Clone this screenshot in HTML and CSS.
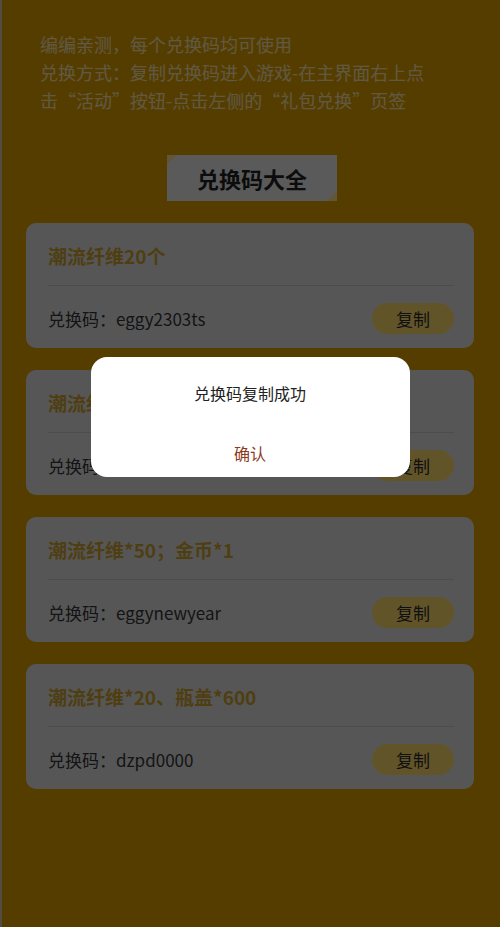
FILE: index.html
```html
<!DOCTYPE html>
<html lang="zh-CN">
<head>
  <meta charset="UTF-8">
  <meta name="viewport" content="width=device-width, initial-scale=1.0">
  <title>兑换码大全</title>
  <link rel="stylesheet" href="styles.css">
</head>
<body>
  <div class="page">
    <div class="intro">
      <p>编编亲测，每个兑换码均可使用</p>
      <p>兑换方式：复制兑换码进入游戏-在主界面右上点击“活动”按钮-点击左侧的“礼包兑换”页签</p>
    </div>

    <div class="badge-wrap">
      <h2 class="badge">兑换码大全</h2>
    </div>

    <div class="code-list">
      <div class="code-card">
        <div class="code-title">潮流纤维20个</div>
        <div class="code-row">
          <span class="code-text">兑换码：eggy2303ts</span>
          <button class="copy-btn">复制</button>
        </div>
      </div>

      <div class="code-card">
        <div class="code-title">潮流纤维*30</div>
        <div class="code-row">
          <span class="code-text">兑换码：eggyparty</span>
          <button class="copy-btn">复制</button>
        </div>
      </div>

      <div class="code-card">
        <div class="code-title">潮流纤维*50；金币*1</div>
        <div class="code-row">
          <span class="code-text">兑换码：eggynewyear</span>
          <button class="copy-btn">复制</button>
        </div>
      </div>

      <div class="code-card">
        <div class="code-title">潮流纤维*20、瓶盖*600</div>
        <div class="code-row">
          <span class="code-text">兑换码：dzpd0000</span>
          <button class="copy-btn">复制</button>
        </div>
      </div>
    </div>
  </div>

  <div class="mask">
    <div class="dialog">
      <div class="dialog-msg">兑换码复制成功</div>
      <div class="dialog-btn">确认</div>
    </div>
  </div>
</body>
</html>
```

FILE: styles.css
```css
html, body {
  margin: 0;
  padding: 0;
}
body {
  font-family: "Noto Sans CJK SC", "Noto Sans", sans-serif;
  background-color: #d59a00;
  min-height: 927px;
}
.page {
  border-left: 2px solid #c8c0a8;
  min-height: 927px;
  box-sizing: border-box;
}
.intro {
  width: 396px;
  padding: 30px 0 0 38px;
  color: rgba(255, 255, 255, 0.68);
  font-size: 18px;
  line-height: 28px;
}
.intro p {
  margin: 0;
}
.badge-wrap {
  display: flex;
  justify-content: center;
  margin-top: 41px;
}
.badge {
  position: relative;
  margin: 0;
  width: 170px;
  height: 46px;
  line-height: 46px;
  text-align: center;
  background: #e0e0e0;
  color: #1e1e1e;
  font-size: 22px;
  font-weight: bold;
  margin-left: 2px;
}
.badge::before,
.badge::after {
  content: "";
  position: absolute;
  width: 0;
  height: 0;
  border: 5px solid transparent;
}
.badge::before {
  left: 0;
  top: 0;
  border-left-color: #efd890;
  border-top-color: #efd890;
}
.badge::after {
  right: 0;
  bottom: 0;
  border-right-color: #efd890;
  border-bottom-color: #efd890;
}
.code-list {
  display: flex;
  flex-direction: column;
  gap: 22px;
  margin: 22px 26px 0 24px;
}
.code-card {
  background: #d8d8da;
  border-radius: 10px;
  padding: 20px 20px 14px 22px;
  height: 125px;
  box-sizing: border-box;
}
.code-title {
  color: #c49c2c;
  font-size: 19px;
  font-weight: bold;
  line-height: 25px;
  padding-bottom: 17px;
  border-bottom: 1px solid #bfbfbf;
}
.code-row {
  display: flex;
  justify-content: space-between;
  align-items: center;
  margin-top: 17px;
  height: 31px;
}
.code-text {
  color: #333;
  font-size: 17px;
}
.copy-btn {
  width: 82px;
  height: 31px;
  border: none;
  border-radius: 16px;
  background: #f4d266;
  color: #2a2a2a;
  font-family: inherit;
  font-size: 17px;
  padding: 0;
}
.mask {
  position: fixed;
  top: 0;
  left: 0;
  right: 0;
  bottom: 0;
  background: rgba(0, 0, 0, 0.6);
  display: flex;
  justify-content: center;
  align-items: flex-start;
  padding-top: 357px;
}
.dialog {
  width: 319px;
  background: #fff;
  border-radius: 16px;
  text-align: center;
  font-size: 16px;
}
.dialog-msg {
  color: #222;
  line-height: 22px;
  padding: 25px 20px;
}
.dialog-btn {
  color: #8b3a1e;
  height: 48px;
  line-height: 48px;
}
```
